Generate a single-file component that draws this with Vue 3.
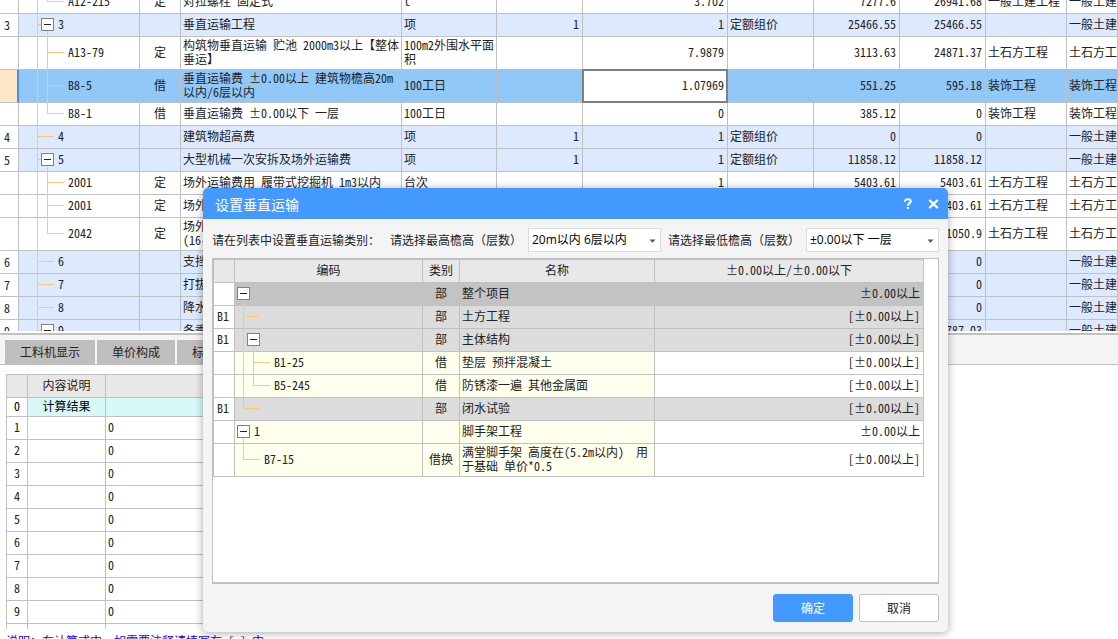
<script setup>
import { h, ref } from 'vue'

// Latin runs take half of a CJK cell, the plus-minus sign a full one
function Mixed(props) {
  const parts = String(props.text ?? '').match(/±|[\x20-\x7e]+|[^\x20-\x7e±]+/g) || []
  return h('span', { class: 'mixed' }, parts.map((p) =>
    p === '±' ? h('span', { class: 'full' }, p)
      : /^[\x20-\x7e]/.test(p) ? h('span', { class: 'half' }, p)
      : p))
}
Mixed.props = ['text']

// Guide lines and the fold box in front of a code
function Branch({ x, height, pass, last, box }) {
  const mid = Math.floor((height - 2) / 2)
  const bar = (bx, by, w, bh, fill = '#ffc878') => h('rect', { x: bx, y: by, width: w, height: bh, fill })
  const items = (pass || []).map((p) => bar(p, 0, 1, height))
  if (x >= 0) {
    items.push(bar(x, 0, 1, last ? mid : height))
    items.push(bar(x, mid, box ? 5 : 17, 1))
  }
  if (box) {
    items.push(bar(x + 10, mid, 1, height - mid))
    items.push(h('rect', { x: x + 4.5, y: mid - 5.5, width: 12, height: 12, fill: '#fff', stroke: '#808080' }))
    items.push(bar(x + 7, mid, 7, 1, '#222'))
  }
  return h('svg', { class: 'branch', width: x + 21, height, 'shape-rendering': 'crispEdges', 'aria-hidden': 'true' }, items)
}
Branch.props = ['x', 'height', 'pass', 'last', 'box']

const general = '一般土建工程'
const earth = '土石方工程'
const deco = '装饰工程'
const top = { x: 18 }
const child = { x: 28, pass: [18] }
const rows = [
  { tree: { ...child, last: true }, code: 'A12-215', kind: '定', name: '对拉螺栓 固定式', unit: 't', qty: '3.702', price: '7277.6', total: '26941.68', major: general, fee: general },
  { no: 3, tree: { ...top, box: true }, code: '3', name: '垂直运输工程', unit: '项', formula: '1', qty: '1', mode: '定额组价', price: '25466.55', total: '25466.55', fee: general },
  { tree: child, tall: true, code: 'A13-79', kind: '定', name: '构筑物垂直运输 贮池 2000m3以上【整体\n垂运】', unit: '100m2外围水平面\n积', qty: '7.9879', price: '3113.63', total: '24871.37', major: earth, fee: earth },
  { tree: child, tall: true, active: true, code: 'B8-5', kind: '借', name: '垂直运输费 ±0.00以上 建筑物檐高20m\n以内/6层以内', unit: '100工日', qty: '1.07969', price: '551.25', total: '595.18', major: deco, fee: deco },
  { tree: { ...child, last: true }, code: 'B8-1', kind: '借', name: '垂直运输费 ±0.00以下 一层', unit: '100工日', qty: '0', price: '385.12', total: '0', major: deco, fee: deco },
  { no: 4, tree: top, code: '4', name: '建筑物超高费', unit: '项', formula: '1', qty: '1', mode: '定额组价', price: '0', total: '0', fee: general },
  { no: 5, tree: { ...top, box: true }, code: '5', name: '大型机械一次安拆及场外运输费', unit: '项', formula: '1', qty: '1', mode: '定额组价', price: '11858.12', total: '11858.12', fee: general },
  { tree: child, code: '2001', kind: '定', name: '场外运输费用 履带式挖掘机 1m3以内', unit: '台次', qty: '1', price: '5403.61', total: '5403.61', major: earth, fee: earth },
  { tree: child, code: '2001', kind: '定', name: '场外', total: '5403.61', major: earth, fee: earth },
  { tree: { ...child, last: true }, tall: true, code: '2042', kind: '定', name: '场外\n(16-', total: '1050.9', major: earth, fee: earth },
  { no: 6, tree: top, code: '6', name: '支挡', total: '0', fee: general },
  { no: 7, tree: top, code: '7', name: '打拔', total: '0', fee: general },
  { no: 8, tree: top, code: '8', name: '降水', total: '0', fee: general },
  { no: 9, tree: { ...top, box: true, last: true }, code: '9', name: '冬季', total: '787.03', fee: general }
]

const items = [
  { tone: 'dark', tree: { x: -2, box: true }, kind: '部', name: '整个项目', value: '±0.00以上' },
  { tone: 'mid', no: 'B1', tree: { x: 8 }, kind: '部', name: '土方工程', value: '[±0.00以上]' },
  { tone: 'mid', no: 'B1', tree: { x: 8, box: true }, kind: '部', name: '主体结构', value: '[±0.00以上]' },
  { tone: 'pale', tree: { x: 18, pass: [8] }, code: 'B1-25', kind: '借', name: '垫层 预拌混凝土', value: '[±0.00以上]' },
  { tone: 'pale', tree: { x: 18, pass: [8], last: true }, code: 'B5-245', kind: '借', name: '防锈漆一遍 其他金属面', value: '[±0.00以上]' },
  { tone: 'mid', no: 'B1', tree: { x: 8, last: true }, kind: '部', name: '闭水试验', value: '[±0.00以上]' },
  { tone: 'pale', tree: { x: -2, box: true }, code: '1', name: '脚手架工程', value: '±0.00以上' },
  { tone: 'pale', tall: true, tree: { x: 8, last: true }, code: 'B7-15', kind: '借换', name: '满堂脚手架 高度在(5.2m以内)  用\n于基础 单价*0.5', value: '[±0.00以上]' }
]

const tabs = ['工料机显示', '单价构成', '标']
const highest = ref('20m以内 6层以内')
const lowest = ref('±0.00以下 一层')
</script>

<template>
  <main class="page">
    <section class="upper">
      <table class="grid budget">
        <colgroup>
          <col class="w-no"><col class="w-code"><col class="w-kind"><col class="w-name"><col class="w-unit">
          <col class="w-num"><col class="w-qty"><col class="w-num"><col class="w-num"><col class="w-num">
          <col class="w-major"><col>
        </colgroup>
        <tbody>
          <tr v-for="(r, i) in rows" :key="i" :class="{ group: r.tree.x === 18, tall: r.tall, active: r.active }">
            <td class="no"><Mixed :text="r.no" /></td>
            <td><div class="node"><Branch v-bind="r.tree" :height="r.tall ? 33 : 23" /><Mixed :text="r.code" /></div></td>
            <td class="center"><Mixed :text="r.kind" /></td>
            <td><Mixed :text="r.name" /></td>
            <td><Mixed :text="r.unit" /></td>
            <td class="right"><Mixed :text="r.formula" /></td>
            <td class="right editable">
              <input v-if="r.active" class="editor" type="text" :value="r.qty" aria-label="工程量">
              <Mixed v-else :text="r.qty" />
            </td>
            <td><Mixed :text="r.mode" /></td>
            <td class="right"><Mixed :text="r.price" /></td>
            <td class="right"><Mixed :text="r.total" /></td>
            <td><Mixed :text="r.major" /></td>
            <td><Mixed :text="r.fee" /></td>
          </tr>
        </tbody>
      </table>
    </section>

    <section class="lower">
      <nav class="tabs">
        <button v-for="t in tabs" :key="t" type="button" class="tab">{{ t }}</button>
      </nav>
      <div class="detail">
        <table class="grid calc">
          <colgroup><col class="w-index"><col class="w-desc"><col></colgroup>
          <thead>
            <tr><th></th><th>内容说明</th><th></th></tr>
          </thead>
          <tbody>
            <tr class="result"><td class="center"><Mixed text="0" /></td><td class="center">计算结果</td><td></td></tr>
            <tr v-for="n in 9" :key="n"><td class="center"><Mixed :text="n" /></td><td></td><td><Mixed text="0" /></td></tr>
            <tr class="rest"><td></td><td></td><td></td></tr>
          </tbody>
        </table>
        <p class="note"><Mixed text="说明：在计算式中，如需要注释请填写在 [ ] 中" /></p>
      </div>
    </section>

    <div class="dialog" role="dialog" aria-labelledby="dialog-title">
      <header class="titlebar">
        <h1 id="dialog-title">设置垂直运输</h1>
        <button type="button" class="tool" aria-label="帮助">
          <svg width="10" height="12" viewBox="0 0 10 12"><path d="M2 3.8V2.9Q2.3 1.2 4.8 1.2Q7.7 1.2 7.7 3.4Q7.7 4.6 6.3 5.4Q5 6.2 5 7.8" fill="none" stroke="#fff" stroke-width="2" /><rect x="4" y="9" width="2" height="2" fill="#fff" /></svg>
        </button>
        <button type="button" class="tool" aria-label="关闭">
          <svg width="11" height="10" viewBox="0 0 11 10"><path d="M1.3 1L9.7 9M9.7 1L1.3 9" fill="none" stroke="#fff" stroke-width="2.4" /></svg>
        </button>
      </header>
      <div class="body">
        <div class="filters">
          <span class="hint">请在列表中设置垂直运输类别：</span>
          <div class="field">
            <label for="highest">请选择最高檐高（层数）</label>
            <div class="pick">
              <select id="highest" v-model="highest"><option>20m以内 6层以内</option></select>
              <svg class="arrow" width="7" height="4" viewBox="0 0 7 4"><path d="M0.5 0.5H6.5L3.5 3.8Z" fill="#555" /></svg>
            </div>
          </div>
          <div class="field">
            <label for="lowest">请选择最低檐高（层数）</label>
            <div class="pick">
              <select id="lowest" v-model="lowest"><option>±0.00以下 一层</option></select>
              <svg class="arrow" width="7" height="4" viewBox="0 0 7 4"><path d="M0.5 0.5H6.5L3.5 3.8Z" fill="#555" /></svg>
            </div>
          </div>
        </div>
        <div class="panel">
          <table class="grid choose">
            <colgroup><col class="w-index"><col class="w-tree"><col class="w-type"><col class="w-title"><col></colgroup>
            <thead>
              <tr><th></th><th>编码</th><th>类别</th><th>名称</th><th><Mixed text="±0.00以上/±0.00以下" /></th></tr>
            </thead>
            <tbody>
              <tr v-for="(r, i) in items" :key="i" :class="[r.tone, { tall: r.tall }]">
                <td class="no"><Mixed :text="r.no" /></td>
                <td><div class="node"><Branch v-bind="r.tree" :height="r.tall ? 33 : 23" /><Mixed :text="r.code" /></div></td>
                <td class="center"><Mixed :text="r.kind" /></td>
                <td><Mixed :text="r.name" /></td>
                <td class="right value"><Mixed :text="r.value" /></td>
              </tr>
            </tbody>
          </table>
        </div>
        <footer class="actions">
          <button type="button" class="btn primary">确定</button>
          <button type="button" class="btn">取消</button>
        </footer>
      </div>
    </div>
  </main>
</template>

<style>
body { margin: 0; background: #fff; }
.mixed { white-space: pre; }
.mixed .half { font-family: "Noto Sans Mono CJK SC", monospace; font-size: 12px; line-height: 10px; }
.mixed .full { display: inline-block; width: 12px; line-height: 12px; text-align: center; }
.branch { display: block; flex: none; margin-bottom: -1px; }
.branch + .mixed { padding-bottom: 2px; }
</style>

<style scoped>
.page {
  position: relative;
  display: flex;
  flex-direction: column;
  height: 100vh;
  overflow: hidden;
  font: 12px/14px "Noto Sans CJK SC", sans-serif;
  color: #222;
}
button, input, select { font: inherit; color: inherit; }

.upper { flex: 1; min-height: 0; overflow: hidden; border-bottom: 2px solid #fff; }
.grid { border-collapse: separate; border-spacing: 0; table-layout: fixed; width: 100%; }
.grid tr { height: 23px; }
.grid tr.tall { height: 33px; }
.grid td, .grid th {
  padding: 0 2px 2px;
  border-right: 1px solid #c0c0c0;
  border-bottom: 1px solid #c0c0c0;
  overflow: hidden;
  white-space: nowrap;
  text-align: left;
  font-weight: normal;
}
.grid th { background: #e8e8e8; text-align: center; }
.grid .center { text-align: center; }
.grid .right { padding-right: 3px; text-align: right; }
.grid td:has(.node) { padding: 0; overflow: visible; }
.node { display: flex; align-items: center; }

.budget { margin-top: -9px; }
.budget td.no { padding: 0 0 0 4px; }
.choose td.no { padding-left: 3px; }
.budget .group td:not(.no) { background: #dde9ff; }
.budget .active td { background: #91c8f7; }
.budget .active td.no { background: #ffe6c8; border-right: 2px solid #3c91f5; }
.budget td.editable { position: relative; overflow: visible; }
.editor {
  position: absolute;
  inset: -1px;
  box-sizing: border-box;
  width: calc(100% + 2px);
  padding: 0 2px 3px;
  border: 2px solid #808080;
  border-radius: 0;
  background: #fff;
  font: 12px "Noto Sans Mono CJK SC", monospace;
  text-align: right;
  outline: none;
}
.w-no { width: 19px; }
.w-code { width: 121px; }
.w-kind { width: 41px; }
.w-name { width: 221px; }
.w-unit { width: 95px; }
.w-num { width: 86px; }
.w-qty { width: 145px; }
.w-major { width: 81px; }
.w-index { width: 21px; }
.w-desc { width: 78px; }
.w-tree { width: 188px; }
.w-type { width: 37px; }
.w-title { width: 195px; }

.lower { flex: 0 0 306px; overflow: hidden; }
.tabs {
  display: flex;
  align-items: flex-end;
  gap: 2px;
  height: 29px;
  padding-left: 5px;
  border-top: 2px solid #c0c0c0;
  border-bottom: 1px solid #c0c0c0;
  background: #f4f4f4;
}
.tab { height: 24px; padding: 0 15px; border: 0; background: #bebebe; }
.detail { padding: 9px 0 0 6px; white-space: nowrap; }
.calc { width: 50%; border-top: 1px solid #c0c0c0; border-left: 1px solid #c0c0c0; }
.calc .result { height: 19px; color: #000; }
.calc .result td:not(:first-child) { background: #d9f8f8; }
.calc .rest { height: 5px; }
.calc .rest td { border-bottom: 0; }
.note { margin: 5px 0 0; color: #00f; }

.dialog {
  position: absolute;
  left: 203px;
  top: 188px;
  width: 745px;
  border-radius: 5px;
  background: #f4f4f4;
  box-shadow: 0 1px 8px rgba(0, 0, 0, 0.35);
  overflow: hidden;
}
.titlebar {
  display: flex;
  align-items: center;
  gap: 15px;
  height: 31px;
  padding: 0 9px 0 12px;
  background: #4499ff;
  color: #fff;
}
.titlebar h1 { flex: 1; margin: 0; font-size: 14px; line-height: 20px; font-weight: normal; }
.tool { display: flex; padding: 0; border: 0; background: none; }
.body { padding: 9px 9px 10px; }
.filters { display: flex; align-items: center; justify-content: space-between; white-space: nowrap; }
.hint { margin-right: 3px; }
.field { display: flex; align-items: center; gap: 6px; }
.pick { position: relative; }
.pick select {
  display: block;
  box-sizing: border-box;
  width: 133px;
  height: 24px;
  padding: 0 3px;
  border: 1px solid #dcdcdc;
  border-radius: 0;
  background: #fff;
  font-family: "Open Sans", "Noto Sans CJK SC", sans-serif;
  color: #000;
  appearance: none;
}
.arrow { position: absolute; right: 5px; top: 11px; pointer-events: none; }
.panel {
  box-sizing: border-box;
  min-height: 326px;
  margin-top: 6px;
  padding-right: 14px;
  border: 1px solid #c0c0c0;
  border-bottom-width: 2px;
  background: #fff;
}
.choose { border-top: 1px solid #c0c0c0; border-left: 1px solid #c0c0c0; }
.choose .dark td:not(.no) { background: #c3c3c3; }
.choose .mid td:not(.no) { background: #dcdcdc; }
.choose .pale td:not(.no):not(.value) { background: #ffffee; }
.actions { display: flex; justify-content: flex-end; gap: 6px; margin-top: 10px; }
.btn {
  width: 80px;
  height: 28px;
  padding: 0;
  border: 1px solid #c0c0c0;
  border-radius: 3px;
  background: #fff;
}
.btn.primary { border-color: #4499ff; background: #4499ff; color: #fff; }
</style>
